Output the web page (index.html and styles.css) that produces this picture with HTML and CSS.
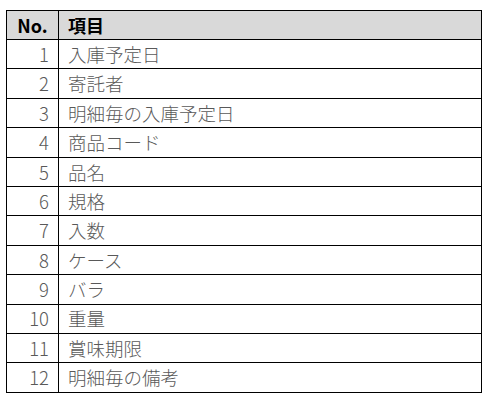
FILE: index.html
```html
<!DOCTYPE html>
<html lang="ja">
<head>
<meta charset="utf-8">
<link rel="stylesheet" href="styles.css">
</head>
<body>
<table class="items">
  <thead>
    <tr><th class="no">No.</th><th class="name">項目</th></tr>
  </thead>
  <tbody>
    <tr><td class="no">1</td><td class="name">入庫予定日</td></tr>
    <tr><td class="no">2</td><td class="name">寄託者</td></tr>
    <tr><td class="no">3</td><td class="name">明細毎の入庫予定日</td></tr>
    <tr><td class="no">4</td><td class="name">商品コード</td></tr>
    <tr><td class="no">5</td><td class="name">品名</td></tr>
    <tr><td class="no">6</td><td class="name">規格</td></tr>
    <tr><td class="no">7</td><td class="name">入数</td></tr>
    <tr><td class="no">8</td><td class="name">ケース</td></tr>
    <tr><td class="no">9</td><td class="name">バラ</td></tr>
    <tr><td class="no">10</td><td class="name">重量</td></tr>
    <tr><td class="no">11</td><td class="name">賞味期限</td></tr>
    <tr><td class="no">12</td><td class="name">明細毎の備考</td></tr>
  </tbody>
</table>
</body>
</html>
```
FILE: styles.css
```css
html, body {
  margin: 0;
  padding: 0;
  background: #ffffff;
}
body {
  padding: 10px 0 0 6px;
  font-family: "Noto Sans CJK JP", "Noto Sans", sans-serif;
}
.items {
  border-collapse: collapse;
  width: 476px;
  table-layout: fixed;
}
.items th, .items td {
  border: 1px solid #000000;
  padding: 0;
  height: 28.4px;
  line-height: 1;
  vertical-align: middle;
}
.items th {
  background: #d9d9d9;
  color: #000000;
  font-weight: 700;
  font-size: 18px;
  height: 28px;
}
.items td {
  color: #595959;
  font-size: 18.5px;
  font-weight: 300;
}
.items .no {
  width: 42px;
  text-align: right;
  padding-right: 9px;
}
.items th.no {
  text-align: center;
  padding-right: 0;
  padding-left: 0;
  width: 51px;
}
.items .name {
  text-align: left;
  padding-left: 9px;
}
```
